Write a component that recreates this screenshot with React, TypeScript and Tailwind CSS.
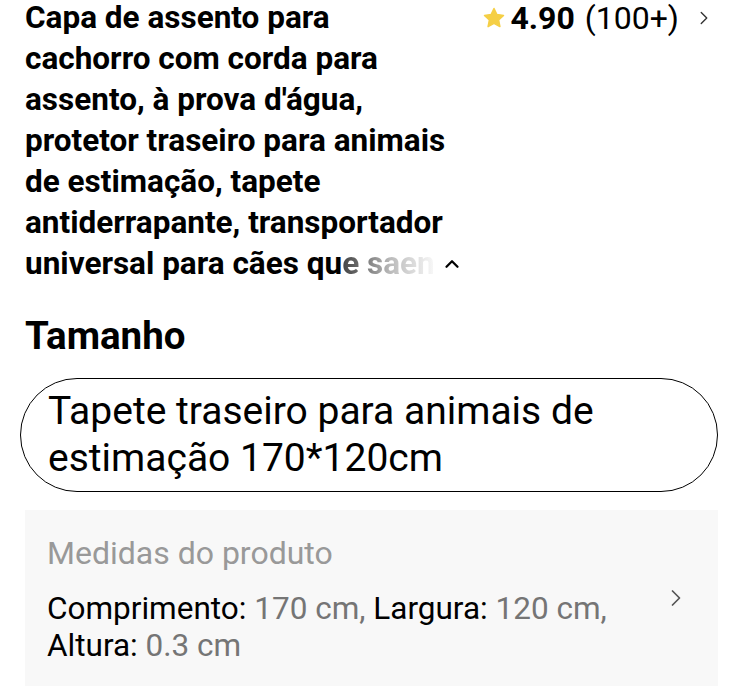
import {ChevronRight, ChevronUp} from "lucide-react";

function Star() {
    return (
        <svg width="24" height="24" viewBox="0 0 24 24" className="shrink-0">
            <path
                d="M12 2.5l2.9 6.1 6.6.8-4.9 4.6 1.3 6.6L12 17.3l-5.9 3.3 1.3-6.6-4.9-4.6 6.6-.8z"
                fill="#f5cf45"
                stroke="#f5cf45"
                strokeWidth="1.5"
                strokeLinejoin="round"
            />
        </svg>
    );
}

function App() {
    const titleLines = [
        "Capa de assento para",
        "cachorro com corda para",
        "assento, à prova d'água,",
        "protetor traseiro para animais",
        "de estimação, tapete",
        "antiderrapante, transportador",
    ];

    return (
        <div className="w-[743px] h-[700px] bg-white text-black overflow-hidden"
             style={{fontFamily: "Roboto, 'Noto Sans', sans-serif"}}>
            {/* Title + rating */}
            <div className="flex justify-between pl-[25px] pr-[28px]">
                <h1 className="text-[31.5px] font-bold leading-[41px] -mt-[3px] whitespace-nowrap">
                    {titleLines.map((line) => (
                        <div key={line}>{line}</div>
                    ))}
                    <div className="flex items-center">
                        <span>universal para cães qu</span>
                        <span className="bg-gradient-to-r from-[#444] via-[#bbb] to-white bg-clip-text text-transparent pr-[4px]">
                            e saen
                        </span>
                        <ChevronUp size={22} strokeWidth={2.5} className="ml-[2px]"/>
                    </div>
                </h1>
                <div className="flex items-center h-[36px] text-[32px]">
                    <Star/>
                    <span className="font-bold ml-[4px]">4.90</span>
                    <span className="ml-[10px]">(100+)</span>
                    <ChevronRight size={22} strokeWidth={1.5} className="ml-[14px] text-[#333]"/>
                </div>
            </div>

            {/* Tamanho */}
            <h2 className="pl-[25px] mt-[32px] text-[38.5px] font-bold leading-[40px]">Tamanho</h2>

            <div className="mx-[20px] mt-[22px] w-[698px] h-[114px] border-[1.5px] border-black rounded-full flex items-center pl-[27px] pr-6">
                <p className="text-[39px] leading-[47px] whitespace-nowrap">
                    Tapete traseiro para animais de<br/>estimação 170*120cm
                </p>
            </div>

            {/* Medidas */}
            <div className="mx-[25px] mt-[18px] w-[693px] h-[176px] bg-[#f8f8f8] pl-[22px] pr-[28px] pt-[24px]">
                <div className="text-[32px] leading-[38px] text-[#999]">Medidas do produto</div>
                <div className="flex justify-between mt-[18px]">
                    <p className="text-[31.5px] leading-[37px] text-[#757575] whitespace-nowrap">
                        <span className="text-black">Comprimento:</span> 170 cm, <span className="text-black">Largura:</span> 120 cm,
                        <br/>
                        <span className="text-black">Altura:</span> 0.3 cm
                    </p>
                    <ChevronRight size={28} strokeWidth={1.5} className="text-[#555] mt-[-6px]"/>
                </div>
            </div>
        </div>
    );
}

export default App;
